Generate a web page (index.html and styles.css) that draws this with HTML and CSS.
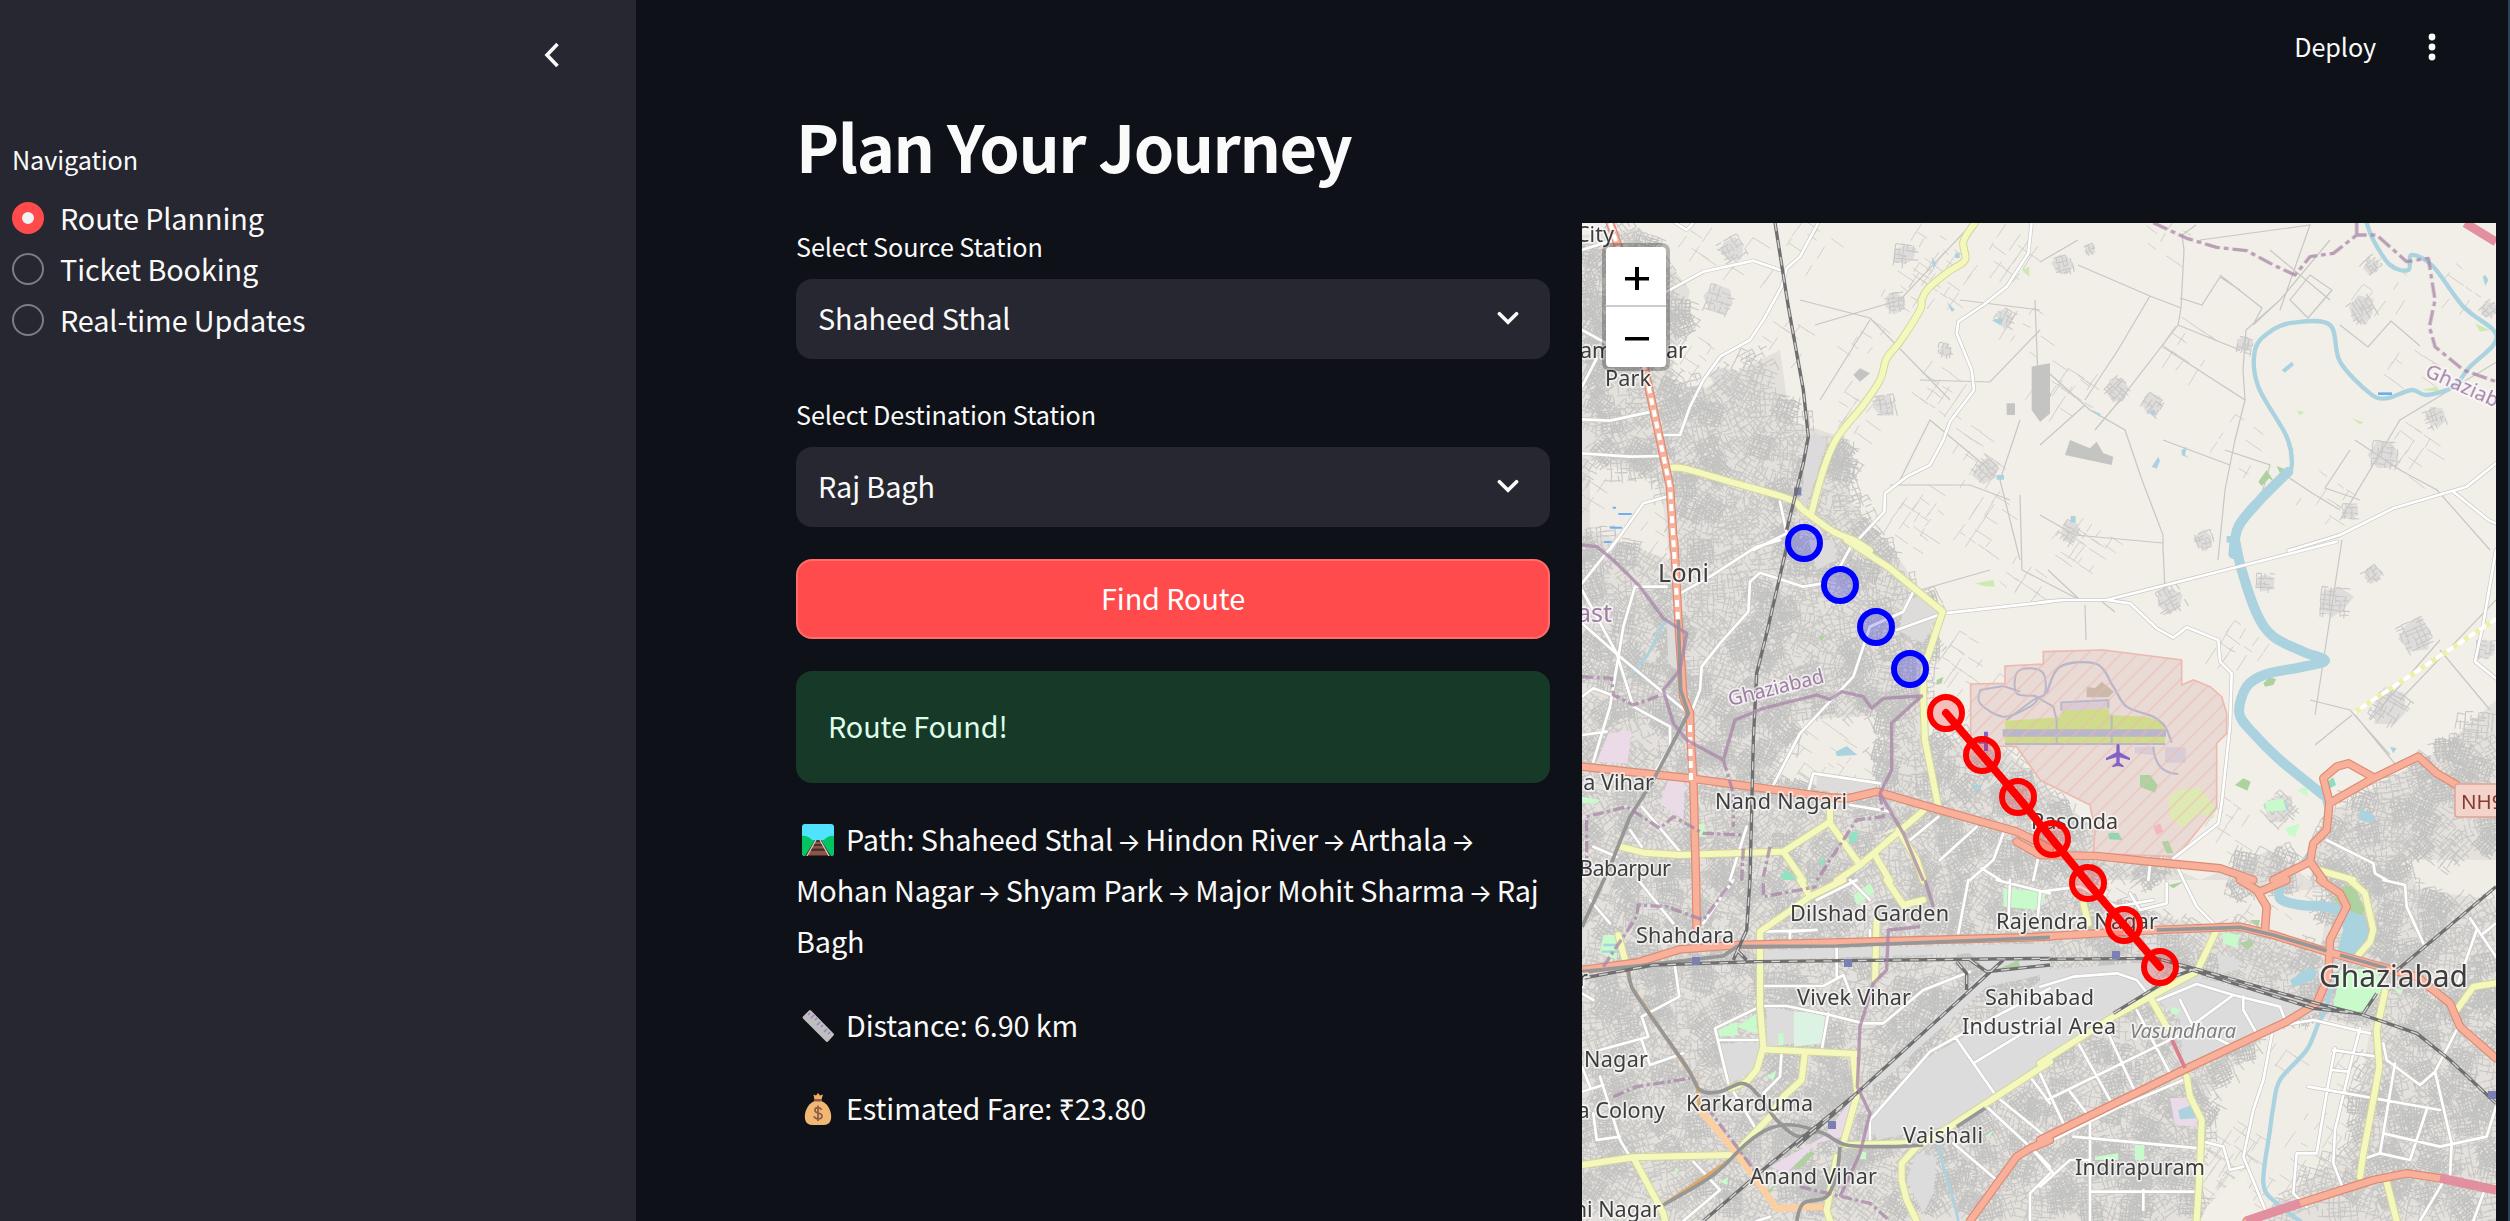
FILE: index.html
```html
<!DOCTYPE html>
<html lang="en">
<head>
<meta charset="utf-8">
<title>Plan Your Journey</title>
<link rel="stylesheet" href="styles.css">
</head>
<body>
<div class="app">
  <aside class="sidebar">
    <div class="sidebar-head">
      <svg class="collapse" viewBox="0 0 16 26"><path d="M13.5 2 3 13l10.500 11"/></svg>
    </div>
    <div class="field-label">Navigation</div>
    <div class="radio"><span class="dot dot-on"></span><span>Route Planning</span></div>
    <div class="radio"><span class="dot"></span><span>Ticket Booking</span></div>
    <div class="radio"><span class="dot"></span><span>Real-time Updates</span></div>
  </aside>
  <main class="main">
    <header class="toolbar">
      <span class="deploy">Deploy</span>
      <svg class="kebab" viewBox="0 0 8 28"><circle cx="4" cy="4" r="3.400"/><circle cx="4" cy="14" r="3.400"/><circle cx="4" cy="24" r="3.400"/></svg>
    </header>
    <h1 class="title">Plan Your Journey</h1>
    <div class="columns">
      <section class="form">
        <div class="field-label">Select Source Station</div>
        <div class="select"><span>Shaheed Sthal</span><svg class="chev" viewBox="0 0 20 14"><path d="M2 2.500 10 10.500 18 2.500"/></svg></div>
        <div class="field-label second">Select Destination Station</div>
        <div class="select"><span>Raj Bagh</span><svg class="chev" viewBox="0 0 20 14"><path d="M2 2.500 10 10.500 18 2.500"/></svg></div>
        <div class="button">Find Route</div>
        <div class="alert">Route Found!</div>
        <p class="line"><svg class="emoji" viewBox="0 0 32 32"><defs><clipPath id="tile"><rect width="32" height="32" rx="3"/></clipPath></defs><g clip-path="url(#tile)"><rect width="32" height="32" fill="#50e2ff"/><path d="M0 12q5-1 10 4h12q5-5 10-4v20H0z" fill="#00c562"/><path d="M13 16h6l10 16H3z" fill="#4a2f2c"/><path d="M12 18h8v2h-8zM10 22h12v2.500H10zM7 27h18v4H7z" fill="#8d5547"/><path d="M14 16 5 32M18 16l9 16" stroke="#d8c8c8" stroke-width="1.300" fill="none"/></g></svg>Path: Shaheed Sthal <span class="arr">→</span> Hindon River <span class="arr">→</span> Arthala <span class="arr">→</span><br>Mohan Nagar <span class="arr">→</span> Shyam Park <span class="arr">→</span> Major Mohit Sharma <span class="arr">→</span> Raj<br>Bagh</p>
        <p class="line"><svg class="emoji" viewBox="0 0 32 32"><path d="M1 6.500 7 .5q1-1 2 0L31.500 23.500q1 1 0 2L26 31.500q-1 1-2 0L1 8.500q-1-1 0-2z" fill="#bebebe"/><path d="m8 3-2 2m6 0-3 3m6 0-2 2m5 2-3 3m6 0-2 2m6 2-3 3m6 0-2 2" stroke="#9a7cc8" stroke-width="1.400"/></svg>Distance: 6.90 km</p>
        <p class="line"><svg class="emoji" viewBox="0 0 32 32"><path d="M11.500 1.500 14 2.500 16 0l2 2.500 3-1-1.500 5h-7z" fill="#f3ad61"/><path d="M12.500 8h7C27 11 30 20 29 26q-1 6-8 6H11q-7 0-8-6C2 20 5 11 12.500 8z" fill="#f1b873"/><rect x="12" y="6" width="8" height="2.600" rx="1" fill="#8d5b48"/><path d="M19.500 17q-1-2.500-3.500-2.500-3 0-3 2.500t3 3q4 .8 4 3.200 0 2.600-4 2.600-3 0-4-2.600M16 12.500v15.500" fill="none" stroke="#8d5b48" stroke-width="1.700"/></svg>Estimated Fare: ₹23.80</p>
      </section>
      <section class="map">
        <svg class="map-canvas" viewBox="1582 223 914 998">
          <defs>
            <pattern id="hatch" width="36" height="36" patternUnits="userSpaceOnUse" patternTransform="rotate(-45)"><path d="M0 18h36" stroke="#e9b9b0" stroke-width="4" opacity=".7"/></pattern>
            <g id="minor" fill="none">
              <g transform="translate(1570 210) scale(.33333)"><path d="M36 120 130 90M290 245 400 185 550 152 630 180M745 38 690 140 650 175 635 230 580 330 540 390 450 440 400 510 360 590 330 675H280M36 628 120 632 245 605M36 730 180 740 280 738M36 360 110 400M80 445 36 530M315 38 350 60 370 38M290 860 220 880 120 1020M630 875 650 970 550 1020M1385 38 1375 130 1310 230 1240 285 1165 335 1160 370 1205 480 1212 540 1140 635 1120 690 1080 765 1010 800 945 850 943 905 840 1015"/></g>
              <g transform="translate(2040 210) scale(.33333)"><path d="M1368 760 1280 830 1060 895 900 975 745 1022M1240 845 1345 930 1368 940"/></g>
              <g transform="translate(1570 540) scale(.33333)"><path d="M140 0 36 130M36 150 140 340 190 500 300 560 300 620 240 720M36 250 150 350 355 520M195 140 160 260 120 500 70 665M195 140H290M630 0 560 20 420 110 330 160M760 130 700 140 570 98 540 125 535 215 450 310 395 380 390 450 365 515M1440 185 1120 220 980 270M1030 155 1000 215 900 260 850 410 690 580 610 735M36 585 110 575M36 470 70 445 125 465M715 755 730 700 930 730M840 795 960 815M180 870 215 920M215 800 330 935M530 860 480 1020M1105 830 1020 900M1220 860 1110 960M1300 880 1270 960 1200 1020M70 920 140 950M1235 985 1290 1020M1410 930 1390 1020M845 15 810 80"/></g>
              <g transform="translate(2040 540) scale(.33333)"><path d="M0 187 70 180 200 180 890 5M200 180 270 190 350 265 400 293 440 262 535 300 540 365 575 400 570 560 545 790 535 850 400 955 430 1020M1368 30 1330 250 1305 365 1368 415M860 900 1000 970 1005 1000 1040 1020M330 975 325 1020"/></g>
              <g transform="translate(1570 880) scale(.33333)"><path d="M60 60 120 130M205 0 310 130M490 0 400 130M315 260 328 350 215 410 235 470 90 510M215 480 240 555 340 520M36 560 60 620M36 635 100 615M90 590 150 780 180 830M70 700 80 780 150 770M570 378H650L780 405 880 430H940L1060 330 1200 275M570 380 435 445 475 610 560 750M450 480H570M585 318H760L820 285M800 200V290M775 400 755 510M635 510 630 590 580 640M820 285 845 350M580 155 740 150 660 155V185M900 150V180M1195 0 1165 160M1320 0 1315 130M1410 40 1400 150M1280 0 1440 40M740 60 860 0M840 0 900 60M1155 470 1280 650 1440 780M1210 550 1440 410M1440 325 1170 465 1080 515 900 720V790M1380 590 1440 670M1250 680 1380 800 1440 870M1150 790 1280 900M1390 810 1440 860M1440 880 1380 940V1023M370 845 450 930 340 1023M600 1010 560 1023M36 340 70 360"/></g>
              <g transform="translate(2040 880) scale(.33333)"><path d="M0 320 100 290 230 280 290 300 330 350M330 370 470 312 580 345 720 380 735 420M610 350 610 390 650 460M580 345 410 470 20 660M115 490 210 660M200 450 285 635M290 390 390 580M0 580 70 730M90 635 140 700M420 360 460 440 570 495M0 800 240 680 430 600M100 770 480 805M150 700V1023M155 935H470M0 920 90 840H150M310 930V990M490 785 550 800 570 870 610 860M820 420 700 440 670 600 640 690 610 830 680 1000M820 420 990 460M885 505 860 640 830 820H770L760 940 800 980M960 445 930 560 885 750 880 850 905 915M875 570 925 575M880 510 1010 530M805 620 1200 690M1030 490 1040 540 1140 615 1185 575 1250 450M1065 550 1020 820 960 840M1185 575 1235 790 1230 890M1160 690 1110 840 1020 820M1030 760 1200 800 1340 770 1368 680M430 0 470 80 520 130M1030 0 1095 15 1100 80 1150 190M1290 115 1368 230M1368 130 1330 160M1310 150 1250 320M0 35 120 20 230 80 340 60M270 40 300 90 380 70V10M0 830 40 880M1140 1023 1210 905M1300 1023 1330 940"/></g>
            </g>
            <g id="secondary" fill="none">
              <g transform="translate(1570 210) scale(.33333)"><path class="smooth" d="M1215 38 1180 95 1185 150 1135 185 1075 235 1055 270 1050 300 990 395 950 445 930 510 880 585 800 685 760 780 725 905"/><path class="smooth" d="M290 775 340 775 480 815 660 868 700 900 790 965 850 990 900 1022"/></g>
              <g transform="translate(1570 540) scale(.33333)"><path d="M830 0 960 85 1118 215 1060 390V480L1065 600 1105 800M150 920 220 938 330 945 640 935 780 845V810M640 935 700 1022M780 850 870 975 800 1022M870 975 1060 812M915 945 960 1022M985 870 1040 960 1060 1022"/></g>
              <g transform="translate(2040 540) scale(.33333)"><path d="M835 990 940 1020"/></g>
              <g transform="translate(1570 880) scale(.33333)"><path d="M690 0 720 50 820 0M720 50 570 155V380L580 500 560 570 530 605 480 625M580 508 860 522M705 515 695 600 640 650 600 710 490 825M950 0 1000 75 1060 60M145 165 165 240M920 120 915 300M850 530 862 640 820 790M36 855 190 832 480 825M190 832 280 1000 285 1023M800 830 770 990 780 1023M1140 740 1440 545M1140 740 1040 800 995 850 995 900 1010 960 1040 1023M830 795 1010 790"/></g>
              <g transform="translate(2040 880) scale(.33333)"><path d="M0 550 220 410 470 275 530 150M335 360 380 440M440 590 450 650 485 720 480 860 470 1023M1035 335 1010 450 1018 560 1000 660 970 820 960 890M1040 905 1070 1023M930 0 975 40 1000 150 990 185 955 225M1250 390 1300 320 1368 310M130 70 145 130"/></g>
            </g>
            <g id="primary" fill="none">
              <g transform="translate(1570 210) scale(.33333)"><path d="M120 38 145 110 225 480 270 690 300 830 312 1020"/></g>
              <g transform="translate(1570 540) scale(.33333)"><path d="M36 680 360 715 780 772 835 775 920 755 1110 810 1340 875 1440 925M312 0 325 240 340 470 360 520 362 600 370 720 378 1022"/></g>
              <g transform="translate(2040 540) scale(.33333)"><path d="M-70 905 0 945 170 948 330 965 540 985 640 1020M700 1020 810 965 820 910 860 870 868 790 1000 715 1135 650 1190 700 1250 735M868 785 850 715 890 680 925 670 1000 712M810 965 850 1020"/></g>
              <g transform="translate(1570 880) scale(.33333)"><path d="M378 0 380 140M36 270 200 248 330 208 500 195 900 185 1440 170M1200 1023 1340 830 1380 805 1440 780"/></g>
              <g transform="translate(2040 880) scale(.33333)"><path d="M0 170 350 150 600 140 700 165 860 215 1040 265 1130 290 1230 370 1260 440 1368 535M600 0 650 30 680 80 675 150M660 35 740 0M840 0 900 40 920 80 870 180 865 290 830 370 740 425 430 570 0 780M620 1023 780 970 1000 900 1100 880 1200 895 1368 930"/></g>
            </g>
            <g id="rail" fill="none">
              <g transform="translate(1570 210) scale(.33333)"><path d="M615 38 655 290 700 540 715 680 700 760 650 960"/></g>
              <g transform="translate(1570 540) scale(.33333)"><path d="M655 0 590 280 560 400 550 600 540 1022"/></g>
              <g transform="translate(1570 880) scale(.33333)"><path d="M540 0 530 150 490 240M500 210 530 240M36 295 250 255 560 245 1440 235M400 1023 590 860 860 640 1190 340 1300 240M680 800 850 650M1160 245 1190 280 1190 330M1200 240 1250 275 1440 255"/></g>
              <g transform="translate(2040 880) scale(.33333)"><path d="M0 238 350 235 480 270 830 370 970 405 1130 460 1230 540 1368 670M400 250 500 285 820 385 950 400M220 400 400 290 470 265M1060 280 1368 20M970 400 1010 340"/></g>
            </g>
          </defs>
          <rect x="1582" y="223" width="914" height="998" fill="#f2efe9"/>
          <g id="built"></g>
          <g transform="translate(1570 210) scale(.33333)">
            <path d="M1385 470 1440 460V610L1410 635 1385 600zM1310 580h25v35h-25zM850 495 870 475 900 490 870 515z" fill="#c4c4c3"/>
            <path d="M1085 140 1098 160 1090 175zM1130 275 1155 300 1145 305zM1265 330 1300 325 1290 345zM1280 795h22v14h-22zM1155 130h14v14h-14z" fill="#aad3df"/>
            <path d="M1355 180 1378 170V200z" fill="#cdebb0"/>
            <path d="M145 912h40M120 953h36M102 996h22M128 893h10" stroke="#6cb2f2" stroke-width="6"/>
            <path d="M730 665 770 690 740 800 700 900 700 720z" fill="#dcdada"/><rect x="672" y="832" width="22" height="24" fill="#7a80b4"/>
          </g>
          <g transform="translate(2040 210) scale(.33333)">
            <path d="M0 480 20 500 15 540 35 555 10 590 30 610 0 635zM90 690 150 715 170 695 190 730 220 740 215 765 75 735z" fill="#c4c4c3"/>
            <path d="M725 480 755 455 762 465 735 488zM1328 200 1336 195 1345 210 1336 228zM157 600 182 612 178 620zM335 770 355 740 360 752 350 776zM425 720 440 710 435 735 448 745 425 735zM333 600h12v14h-12zM92 918h15v20h-15zM560 978h14v20h-14z" fill="#aad3df"/>
            <path d="M655 815 680 780 705 820 688 805 665 828zM710 768 735 778 720 790z" fill="#aed1a0"/>
            <path d="M1145 540 1190 530 1200 545zM1305 340 1350 360 1320 365zM770 602 793 605 780 616zM740 680 762 720 755 730zM935 625 970 637 960 643z" fill="#cdebb0"/><path d="M1014 551h42" stroke="#68b1ee" stroke-width="8"/>
          </g>
          <g transform="translate(1570 540) scale(.33333)">
            <path d="M115 580 185 572 172 670 80 665zM295 720 345 715 340 840 270 790z" fill="#ebdbe8"/>
            <path d="M740 705 920 735 900 760 740 750zM1000 190 1060 160 1110 210 1060 310 990 275zM715 0 790 0 800 60 740 90zM290 240 330 250 320 390 295 370z" fill="#dddcdb"/>
            <path d="M797 635 830 618 862 645 800 648zM1210 735 1238 735 1215 757z" fill="#aad3df"/>
            <path d="M840 880 865 870 860 900 835 915zM630 1005 650 990 680 1020H640zM745 960 765 955 760 980z" fill="#8fe3c0"/>
            <path d="M1100 420 1120 410 1115 430 1100 434zM748 290 765 285 755 306z" fill="#aed1a0"/><path d="M1216 130 1270 120 1275 140 1240 138z" fill="#cdebb0"/>
            <path d="M36 770 90 780 80 790H36zM355 860 400 850 410 890H370z" fill="#c8facc"/><path d="M985 870 1060 820 1000 850 920 890z" fill="#eef0d5"/>
          </g>
          <g transform="translate(2040 540) scale(.33333)">
            <path d="M-208 432-105 430V378L10 372V335L190 330 425 360V435L460 420 510 440 545 470 560 520V580L530 610V800L410 950 160 940 165 870 150 795 0 720-70 620-208 615z" fill="#e9dad6"/>
            <path d="M385 770Q420 740 480 745L525 800 520 835 480 820 430 862 390 835z" fill="#dfe9b4"/>
            <path d="M-105 542 60 532 70 510 205 505 210 525 320 530 375 550V612H-105z" fill="#d0db8b"/>
            <path d="M-112 568H378V590H-112z" fill="#bab6ca"/><path d="M140 440 165 445 185 425 222 455 205 472H140z" fill="#ccb9aa"/><path d="M64 487 205 480V505L64 512zM285 622 340 620V645L285 640zM375 622H437V668H375z" fill="#d9ccd6"/>
            <path class="smooth" d="M20 460 60 380 170 372 220 440 260 500 340 530 375 560 395 608" fill="none" stroke="#bab6ca" stroke-width="7"/>
            <path class="smooth" d="M-180 450-180 490-110 530-30 500-10 470-70 460-70 400-30 385 10 400 15 460-20 480-100 540" fill="none" stroke="#bab6ca" stroke-width="6"/>
            <path d="M-105 612H375M50 532V612M215 525V612M64 512V487L205 480V505M340 620Q345 700 415 702M-180 450-110 438-60 455M-20 465 40 500 50 540" fill="none" stroke="#bab6ca" stroke-width="6"/>
            <path d="M300 705 330 705 353 735 345 758 300 740zM365 905 385 902 400 940 380 940zM585 735 610 715 632 725 622 752zM670 430 690 410 708 418 700 435 675 440z" fill="#aed1a0"/>
            <path d="M-208 432-105 430V378L10 372V335L190 330 425 360V435L460 420 510 440 545 470 560 520V580L530 610V800L410 950 160 940 165 870 150 795 0 720-70 620-208 615z" fill="url(#hatch)" stroke="#edb9af" stroke-width="5"/>
            <path d="M205 880 235 878 247 900 207 898z" fill="#94d4b4"/><path d="M340 860 360 850 370 875 350 885z" fill="#f4b6c2"/>
            <path d="M234 611q5 0 5 8v18l31 17v7l-31-9v16l12 9v5l-17-4-17 4v-5l12-9v-16l-31 9v-7l31-17v-18q0-8 5-8z" fill="#8461c4"/>
            <path d="M-162 575v58M-185 605h32" stroke="#8461c4" stroke-width="12"/>
            <path d="M735 865 780 850 765 890 745 885zM675 785 730 775 740 810 680 815zM770 750 800 740 805 770z" fill="#c8facc"/>
            <path d="M960 805 1010 830 990 850 960 840zM1050 620 1070 625 1060 640zM730 780 745 800 740 812z" fill="#aad3df"/><path d="M862 725 880 712 888 735 870 745z" fill="#8fdcc0"/>
          </g>
          <g transform="translate(1570 880) scale(.33333)">
            <path d="M1440 190V280L1200 470 1080 600 930 690 860 790 920 760 1130 740 1440 540V280L1250 320 940 600 870 630 1250 270 1200 220 580 240V210L1440 190z" fill="#dcdcdc"/>
            <path d="M1060 540 1200 460 1440 280V540L1120 740 920 780 910 720zM445 490H570L560 570 480 610zM590 380 680 395V490L590 500zM1040 820 1100 830 1090 940 1060 1000 1010 900z" fill="#dcdcdc"/>
            <path d="M100 165 145 165 140 240 90 215zM445 450 500 425 505 465 450 470zM500 440 560 400V460zM1300 25 1430 35 1410 90 1300 80zM850 45 900 10 915 35 860 75zM625 460H640V495H625zM590 590 620 570 610 600zM870 815H888V838H870zM1245 770 1270 750 1260 770zM450 905 475 890 470 915zM300 880 330 865 320 880z" fill="#c8facc"/>
            <path d="M672 395 765 400 760 490 672 500z" fill="#dcf3e4"/><path d="M100 195h48M95 215h50" stroke="#aad3df" stroke-width="7"/>
            <path d="M600 860 760 770 820 690 850 650 820 770 740 790 650 880z" fill="#ebdbe8"/><path d="M670 860 720 815 735 820 690 865zM590 935 620 910 600 940z" fill="#aed1a0"/>
            <path d="M1280 270 1345 240 1350 260z" fill="#aed1a0"/><path class="smooth" d="M1105 790 1120 860 1150 960 1165 1023" fill="none" stroke="#aad3df" stroke-width="8"/>
          </g>
          <g transform="translate(2040 880) scale(.33333)">
            <path d="M0 270 350 245 330 340 220 400 0 540zM420 260 470 290 850 390 740 430 430 570 420 420 330 340zM530 220 600 240 590 270 540 280z" fill="#dcdcdc"/>
            <path d="M900 270 1010 265 1025 330 985 390 930 400 880 380zM545 155 600 165 590 205 550 190zM285 795H313V840H285zM165 830 235 820V840H165zM395 380 422 390 410 405 392 398zM1060 325 1090 330 1080 345z" fill="#c8facc"/>
            <path d="M910 20 940 15 975 90 960 115 910 80 880 60zM600 190 635 178 640 195 620 208zM630 120 660 120 655 140zM385 15 430 5 400 25z" fill="#aed1a0"/>
            <path d="M750 300 810 262 833 275 820 300 760 322z" fill="#aad3df"/>
            <path d="M390 655 440 652 470 700 470 740 405 735z" fill="#ebdbe8"/><path d="M415 690 455 675 468 715 420 718zM900 80 975 110 985 170 940 230 890 220 910 150z" fill="#aad3df"/>
            <path d="M500 980 610 870 660 1023H480z" fill="#f2efe9"/>
          </g>
          <g class="river">
            <g transform="translate(2040 210) scale(.33333)"><path class="smooth" d="M980 38 1000 90 1050 165 1105 180 1115 135 1180 170 1270 290 1360 360 1360 405 1290 470 1240 530 1160 555 1115 540 1040 565 990 550 900 455 870 345 760 338 690 365 645 420 655 530 740 680 755 770 730 800"/><path class="smooth wide" d="M745 785 660 870 595 950 580 1032"/></g>
            <g transform="translate(2040 540) scale(.33333)"><path class="smooth wide" d="M585 0 605 90 650 220 700 290 790 335 855 362 780 382 680 402 620 440 598 520 640 580 720 660 850 765"/><path class="smooth" d="M850 765 860 850 800 950 740 1020"/></g>
            <g transform="translate(2040 880) scale(.33333)"><path class="smooth wide" d="M725 10 720 55 780 75 880 85 960 140 925 200"/><path class="smooth" d="M880 280 860 380 835 430 800 510 720 600 700 680 690 750 670 910 710 970 780 1023"/></g>
            <g transform="translate(1570 540) scale(.33333)"><path class="thin" d="M285 245 230 350 185 400"/></g>
          </g>
          <use href="#minor" class="minor-case"/><use href="#minor" class="minor-fill"/>
          <use href="#secondary" class="sec-case"/><use href="#secondary" class="sec-fill"/>
          <g transform="translate(1570 880) scale(.33333)" fill="none"><path d="M165 250 185 320 380 610 390 690 500 820 620 985 760 980M280 975 480 840" stroke="#e0a868" stroke-width="10"/><path d="M390 690 500 820 620 985 760 980" stroke="#fbcfa0" stroke-width="20"/></g>
          <use href="#primary" class="pri-case"/><use href="#primary" class="pri-fill"/>
          <g fill="none">
            <path d="M2465 223 2496 242M2440 1178 2496 1190M2246 1221 2300 1203" stroke="#e28fa0" stroke-width="9"/>
            <path d="M1610 223 1618 247 1645 370 1660 440 1670 487 1674 550 1678 620" stroke="#fff" stroke-width="4" stroke-dasharray="7 5"/><path d="M1690 725 1691 780" stroke="#fff" stroke-width="4" stroke-dasharray="7 5"/>
            <path d="M2355 712 2496 619" stroke="#eef0a8" stroke-width="5" stroke-dasharray="8 5"/><path d="M2355 712 2496 619" stroke="#fff" stroke-width="4" stroke-dasharray="8 5" stroke-dashoffset="7"/>
            <path d="M2172 1040 2185 1068" stroke="#d9808e" stroke-width="4"/>
          </g>
          <g class="metro">
            <g transform="translate(1570 540) scale(.33333)"><path d="M325 240 332 450 355 520 250 720 180 830 120 980 36 1160"/></g>
            <g transform="translate(1570 880) scale(.33333)"><path class="smooth" d="M175 265 185 320 230 390 350 560 390 630 450 635 515 610 560 640 620 720 680 768 740 755"/><path class="smooth" d="M280 975 430 885 530 790 600 745 670 735 760 760 830 795 960 800 1060 795"/><path class="smooth" d="M810 800 800 880 770 950 700 970 680 1023"/><path d="M36 275 200 258 460 228 500 200 800 198 1440 172"/><path d="M1160 740 1245 685"/></g>
            <g transform="translate(2040 880) scale(.33333)"><path d="M350 150 600 142 700 165 860 212M900 225 1040 265"/></g>
          </g>
          <use href="#rail" class="rail-base"/><use href="#rail" class="rail-dash"/>
          <path d="M1692 957h8v8h-8zM1844 959h8v8h-8zM1828 1121h8v8h-8zM2112 951h8v8h-8zM2488 1091h8v8h-8z" fill="#7a80b4"/>
          <g class="border">
            <g transform="translate(2040 210) scale(.33333)"><path d="M340 38 440 85 530 112 620 122 700 165 765 195 810 140 880 130 950 75 1010 75 1100 155 1165 145 1185 270 1168 350 1185 410 1270 480 1368 515M950 38V75" stroke-dasharray="46 12 14 12"/></g>
            <g transform="translate(1570 540) scale(.33333)"><path d="M36 15 80 20 130 60 210 140 280 235 350 280 330 390 280 450 310 550 350 600 460 660 495 540 580 505 740 465 780 478 815 455 880 470 905 505 940 475 1055 468 965 550 965 690 930 760 1000 880 1060 1022"/><path stroke-dasharray="34 10 9 10" d="M36 410 125 415 130 465 190 495 275 465M50 1000V830L170 800 270 865 310 830 400 880 520 885M460 660 490 760V860M520 925 515 1022M600 920 580 1010M930 760 940 830 860 840 800 930 740 1022"/></g>
            <g transform="translate(1570 880) scale(.33333)"><path d="M1065 0 1090 80M1050 140 955 150 950 270 910 310 870 440 862 620 900 700 870 820 810 950"/><path d="M690 920 900 970 960 1023M130 650 200 620 360 595M410 680 560 880M100 260 200 110 205 75 290 80 400 120 490 0M580 10V50L740 20" stroke-dasharray="34 10 9 10"/></g>
          </g>
          <g class="labels">
            <text x="1614" y="242" text-anchor="end">City</text>
            <text x="1580" y="358">am</text><text x="1687" y="358" text-anchor="end">ar</text>
            <text x="1605" y="386" textLength="46">Park</text>
            <text x="1658" y="582" class="town" textLength="51">Loni</text>
            <text x="1654" y="790" text-anchor="end">a Vihar</text>
            <text x="1715" y="809" textLength="132">Nand Nagari</text>
            <text x="1671" y="876" text-anchor="end" textLength="92">Babarpur</text>
            <text x="1790" y="921" textLength="159">Dilshad Garden</text>
            <text x="1636" y="943" textLength="98">Shahdara</text>
            <text x="1996" y="929" textLength="162">Rajendra Nagar</text>
            <text x="2031" y="829" textLength="87">Rasonda</text>
            <text x="1797" y="1005" textLength="114">Vivek Vihar</text>
            <text x="1985" y="1005" textLength="109">Sahibabad</text>
            <text x="1962" y="1034" textLength="154">Industrial Area</text>
            <text x="2130" y="1038" textLength="106" class="quarter">Vasundhara</text>
            <text x="1584" y="1067" textLength="64">Nagar</text>
            <text x="1665" y="1118" text-anchor="end">a Colony</text>
            <text x="1686" y="1111" textLength="127">Karkarduma</text>
            <text x="1903" y="1143" textLength="80">Vaishali</text>
            <text x="1750" y="1184" textLength="127">Anand Vihar</text>
            <text x="1661" y="1217" text-anchor="end">ni Nagar</text>
            <text x="1579" y="986">r</text>
            <text x="2075" y="1175" textLength="130">Indirapuram</text>
            <text x="2319" y="987" textLength="149" class="city">Ghaziabad</text>
            <text x="1612" y="622" text-anchor="end" class="district big">ast</text>
            <text transform="translate(1730 706) rotate(-14)" textLength="98" class="district">Ghaziabad</text>
            <text transform="translate(2424 376) rotate(24)" textLength="102" class="district">Ghaziabad</text>
          </g>
          <rect x="2455" y="784" width="60" height="33" rx="3" fill="#f4d3cb" stroke="#dda596" stroke-width="1.500"/>
          <text x="2461" y="809" class="shield">NH9</text>
          <g class="stop-blue"><circle cx="1804" cy="543" r="16"/><circle cx="1840" cy="585" r="16"/><circle cx="1876" cy="627" r="16"/><circle cx="1910" cy="669" r="16"/></g>
          <g class="stop-red"><circle cx="1946" cy="713" r="16"/><circle cx="1982" cy="755" r="16"/><circle cx="2018" cy="797" r="16"/><circle cx="2052" cy="839" r="16"/><circle cx="2088" cy="883" r="16"/><circle cx="2124" cy="925" r="16"/><circle cx="2160" cy="967" r="16"/></g>
          <path class="route" d="M1946 713 1982 755 2018 797 2052 839 2088 883 2124 925 2160 967"/>
        </svg>
        <div class="zoom"><span class="zoom-btn plus"></span><span class="zoom-btn"></span></div>
      </section>
    </div>
  </main>
</div>
<script src="map.js"></script>
</body>
</html>
```
FILE: map.js
```js
// Street texture and curve smoothing for the base map.
(function () {
  var seed = 7;
  function rnd() { seed = (seed * 16807) % 2147483647; return seed / 2147483647; }
  var NS = 'http://www.w3.org/2000/svg';
  var built = document.getElementById('built');

  function add(d, stroke, width, fill) {
    var p = document.createElementNS(NS, 'path');
    p.setAttribute('d', d);
    p.setAttribute('fill', fill || 'none');
    if (stroke) { p.setAttribute('stroke', stroke); p.setAttribute('stroke-width', width); }
    built.appendChild(p);
  }
  function inside(x, y, poly) {
    var c = false;
    for (var i = 0, j = poly.length - 1; i < poly.length; j = i++) {
      var a = poly[i], b = poly[j];
      if ((a[1] > y) !== (b[1] > y) && x < (b[0] - a[0]) * (y - a[1]) / (b[1] - a[1]) + a[0]) c = !c;
    }
    return c;
  }
  // Short parallel and crossing streets in a turned square patch.
  function patch(cx, cy, r, gap, keep, turn) {
    var t = turn === undefined ? rnd() * 1.57 : turn, co = Math.cos(t), si = Math.sin(t), d = '';
    for (var k = 0; k < 2; k++) {
      for (var o = -r; o <= r; o += gap * (0.7 + rnd() * 0.7)) {
        for (var s = -r; s < r; s += r / 2) {
          if (rnd() > keep) continue;
          var e = s + r / 2 + (rnd() - 0.3) * gap, q = o + (rnd() - 0.5) * 2;
          var x1 = k ? o : s, y1 = k ? s : o, x2 = k ? q : e, y2 = k ? e : q;
          d += 'M' + (cx + x1 * co - y1 * si).toFixed(1) + ' ' + (cy + x1 * si + y1 * co).toFixed(1) +
               'L' + (cx + x2 * co - y2 * si).toFixed(1) + ' ' + (cy + x2 * si + y2 * co).toFixed(1);
        }
      }
    }
    return d;
  }

  var urban = [[1582,235],[1640,228],[1690,290],[1670,380],[1700,390],[1780,350],[1790,420],[1850,440],[1850,500],[1900,560],[1940,620],[1920,680],[1925,740],[2000,745],[2060,800],[2110,840],[2200,880],[2270,850],[2310,880],[2325,815],[2370,790],[2440,750],[2496,700],[2496,1221],[1582,1221]];
  var open = [
    [[1590,460],[1660,480],[1670,560],[1590,530]],
    [[1800,720],[1885,715],[1880,790],[1770,780]],
    [[2060,870],[2110,880],[2230,880],[2210,930],[2110,900]],
    [[2290,1010],[2370,1030],[2350,1150],[2250,1221],[2190,1200],[2210,1090]],
    [[2170,890],[2330,890],[2320,950],[2200,920]],
    [[2400,860],[2496,860],[2496,900],[2420,890]]
  ];
  add('M' + urban.map(function (p) { return p.join(' '); }).join('L') + 'z', '', 0, '#e4e1dc');
  open.forEach(function (o) { add('M' + o.map(function (p) { return p.join(' '); }).join('L') + 'z', '', 0, '#f0ede6'); });

  var dense = '', block = '', lanes = '';
  for (var y = 228; y < 1235; y += 20) {
    for (var x = 1585; x < 2510; x += 20) {
      var px = x + (rnd() - 0.5) * 14, py = y + (rnd() - 0.5) * 14;
      var isOpen = open.some(function (o) { return inside(px, py, o); });
      if (inside(px, py, urban) && !isOpen) {
        if (rnd() < 0.42) block += patch(px, py, 11, 3.2, 0.85);
        dense += patch(px, py, 14, 5.5, 0.7);
      } else if (rnd() < (isOpen || x < 2020 ? 0.12 : 0.03)) {
        lanes += patch(px, py, 22, 14, 0.4, 0.6);
      }
    }
  }
  var hamlets = [[2063,265,14],[1905,255,16],[1895,302,14],[1885,405,15],[2362,310,18],[2118,390,16],[2245,345,11],[2385,455,20],[2350,512,12],[2335,602,22],[2415,635,22],[2170,600,20],[2265,582,13],[2390,708,26],[2435,418,14],[2070,533,15],[2005,318,14],[1732,250,18],[1725,380,20],[1985,470,17],[2372,265,12],[2152,405,14],[2373,575,12],[2205,540,13],[2490,310,12],[1945,350,10],[2090,250,8],[2485,650,14],[2280,810,22],[1840,470,20],[1720,300,20]];
  var pad = '';
  hamlets.forEach(function (h) {
    var r = h[2] * 0.75, a = rnd();
    pad += 'M';
    for (var i = 0; i < 6; i++) {
      var rr = r * (0.7 + rnd() * 0.5), t = a + i * 1.047;
      pad += (i ? 'L' : '') + (h[0] + rr * Math.cos(t)).toFixed(1) + ' ' + (h[1] + rr * Math.sin(t)).toFixed(1);
    }
    pad += 'z';
    dense += patch(h[0], h[1], h[2] * 0.65, 4.5, 0.65);
  });
  add(pad, '', 0, '#dfdddb');
  add(lanes, '#d2d0cc', 1);
  add(dense, '#c9c8c6', 1.1);
  add(block, '#c2c2c1', 1.3);

  // Longer country lanes joining the villages.
  add('M2040 262 2078 240M2040 365 2090 410 2125 430 2142 480 2163 535 2163 548M2078 265 2150 296 2181 308 2184 250 2182 235 2196 225M2150 296 2118 350 2085 400M2181 308 2178 325 2120 400 2095 430M2163 347 2245 400 2243 370 2246 330 2280 300M2178 325 2215 340 2240 350M2220 275 2262 308 2253 325M2180 298 2202 305 2220 277 2240 290M2253 325 2280 300 2330 240M2310 275 2290 300 2308 318 2332 290 2310 275M2340 325 2368 347 2391 321 2420 346M2245 400 2235 440 2225 490 2218 560M2225 450 2270 465 2260 500M2285 475 2312 493 2340 510M2355 440 2400 470 2437 490 2490 550M2350 450 2325 488 2360 500M2040 445 2085 405M2040 515 2075 535 2163 543M2163 440 2230 465M2163 548 2165 590M1800 300 1870 318 1950 400M1815 325 1900 300 1985 210M1820 400 1870 320M1920 380 1990 382 2040 330M1990 470 1930 420 1900 480M1960 300 2040 310M2020 420 2000 480 2020 560M2035 300 2038 380M2200 240 2310 225 2280 310M2270 250 2330 300M2500 360 2400 420 2340 520M2310 700 2350 710 2390 755M2342 540 2315 715M2315 745 2352 715M2355 715 2400 770M2370 720 2440 640M2440 650 2490 710M2400 700 2496 600M1890 485 1970 485 2010 500M2020 495 2022 570 2080 600M1920 590 1990 570M2048 570 2080 600M2085 605 2086 640M2100 600 2115 612', '#c6c6c5', 1.2);

  // Catmull-Rom smoothing for rivers, curved roads and metro lines.
  document.querySelectorAll('.smooth').forEach(function (el) {
    var n = el.getAttribute('d').match(/-?[\d.]+/g).map(Number), p = [];
    for (var i = 0; i < n.length; i += 2) p.push([n[i], n[i + 1]]);
    var d = 'M' + p[0].join(' ');
    for (i = 0; i < p.length - 1; i++) {
      var a = p[i - 1] || p[i], b = p[i], c = p[i + 1], e = p[i + 2] || c;
      d += 'C' + [b[0] + (c[0] - a[0]) / 6, b[1] + (c[1] - a[1]) / 6, c[0] - (e[0] - b[0]) / 6, c[1] - (e[1] - b[1]) / 6, c[0], c[1]].join(' ');
    }
    el.setAttribute('d', d);
  });
})();
```
FILE: styles.css
```css
* { box-sizing: border-box; }
html, body { margin: 0; height: 100%; overflow: hidden; background: #0e1117; }
.app {
  display: flex;
  width: 2510px;
  height: 1221px;
  border-right: 2px solid #27465c;
  color: #fafafa;
  font-family: "Noto Sans CJK SC", "Noto Sans", sans-serif;
  font-size: 28.8px;
  line-height: 51.2px;
  letter-spacing: -.1px;
}
.sidebar { width: 636px; height: 100%; background: #262730; padding: 0 12px; }
.sidebar-head { height: 138px; display: flex; justify-content: flex-end; padding: 42px 64px 0 0; }
.collapse { width: 16px; height: 26px; fill: none; stroke: #fafafa; stroke-width: 3.6; }
.field-label { font-size: 25.2px; line-height: 42px; height: 54px; white-space: nowrap; }
.radio { display: flex; align-items: center; gap: 16px; height: 51.2px; white-space: nowrap; }
.dot { width: 32px; height: 32px; border-radius: 50%; border: 2px solid #7d7e84; }
.dot-on { border: 10px solid #ff4b4b; background: #f0f2f6; }

.main { flex: 1; display: flex; flex-direction: column; padding: 0 12px 0 160px; }
.toolbar { height: 102px; display: flex; justify-content: flex-end; align-items: flex-start; padding: 25px 60px 0 0; gap: 52px; }
.deploy { font-size: 25.2px; line-height: 42px; }
.kebab { width: 8px; height: 28px; margin-top: 8px; fill: #fafafa; }
.title { margin: 0; font-size: 64.8px; line-height: 86px; font-weight: 700; height: 121px; letter-spacing: -1.45px; white-space: nowrap; }
.columns { display: flex; gap: 32px; height: 998px; }
.form { width: 754px; padding-top: 2px; }
.select {
  display: flex; align-items: center; justify-content: space-between;
  height: 80px; padding: 0 31px 2px 22px; border-radius: 16px; background: #262730;
}
.chev { width: 22px; height: 15px; fill: none; stroke: #fafafa; stroke-width: 3.4; stroke-linecap: round; }
.second { margin-top: 34px; }
.button {
  height: 80px; margin-top: 32px; border: 2px solid #ff6c6c; border-radius: 16px;
  background: #ff4b4b; color: #fff; text-align: center; line-height: 73px;
}
.alert { height: 112px; margin-top: 32px; padding: 0 32px; border-radius: 16px; background: #173928; color: #dffde9; line-height: 110px; }
.line { margin: 30px 0 0; white-space: nowrap; }
.line + .line { margin-top: 32px; }
.emoji { width: 32px; height: 32px; margin: 0 12px 0 6px; vertical-align: -5px; }
.arr { display: inline-block; width: 20px; margin-right: -.6px; font-family: Inter, sans-serif; font-size: 25px; line-height: 20px; text-indent: -2.500px; }

.map { position: relative; width: 914px; height: 998px; overflow: hidden; letter-spacing: 0; }
.map-canvas { display: block; width: 914px; height: 998px; }
.zoom {
  position: absolute; left: 20px; top: 20px; width: 68px; height: 128px;
  border: 4px solid rgba(0, 0, 0, .25); border-radius: 8px; background: #fff; background-clip: padding-box;
}
.zoom-btn {
  display: block; height: 60px;
  background: linear-gradient(#000, #000) 19px 30px / 24px 3.5px no-repeat;
}
.plus {
  border-bottom: 2px solid #ccc;
  background: linear-gradient(#000, #000) 19px 30px / 24px 3.5px no-repeat, linear-gradient(#000, #000) 29px 20px / 4px 23px no-repeat;
}

.minor-case { stroke: #c9c7c4; stroke-width: 12; }
.minor-fill { stroke: #fff; stroke-width: 8; }
.sec-case { stroke: #d3d79a; stroke-width: 24; }
.sec-fill { stroke: #f5f8bd; stroke-width: 18; }
.pri-case { stroke: #dd8b73; stroke-width: 26; }
.pri-fill { stroke: #f8b09b; stroke-width: 19; }
.rail-base { stroke: #6f6f6f; stroke-width: 10; }
.rail-dash { stroke: #d4d4d4; stroke-width: 4; stroke-dasharray: 26 26; }
.minor-case, .minor-fill, .sec-case, .sec-fill, .pri-case, .pri-fill { stroke-linejoin: round; stroke-linecap: round; }
.river { fill: none; stroke: #aad3df; stroke-width: 13; stroke-linejoin: round; stroke-linecap: round; }
.river .wide { stroke-width: 30; }
.river .thin { stroke-width: 8; }
.metro { fill: none; stroke: #979797; stroke-width: 11; stroke-linejoin: round; }
.border { fill: none; stroke: #a785a6; stroke-width: 10; opacity: .75; stroke-linejoin: round; }
.labels { font-family: "Noto Sans", sans-serif; font-size: 21.6px; fill: #3d3d3d; stroke: #fff; stroke-opacity: .65; stroke-width: 3.5px; paint-order: stroke; stroke-linejoin: round; }
.town { font-size: 25px; }
.city { font-size: 30px; }
.quarter { font-style: italic; font-size: 20px; fill: #808080; }
.district { font-size: 20px; fill: #a07ca4; }
.big { font-size: 25px; }
.shield { font-family: "Noto Sans", sans-serif; font-size: 20.5px; fill: #823c32; }
.stop-blue { fill: rgba(0, 0, 255, .2); stroke: #00f; stroke-width: 6; }
.stop-red { fill: rgba(255, 0, 0, .2); stroke: #f00; stroke-width: 6; }
.route { fill: none; stroke: #f00; stroke-width: 8; stroke-linecap: round; stroke-linejoin: round; }
```
